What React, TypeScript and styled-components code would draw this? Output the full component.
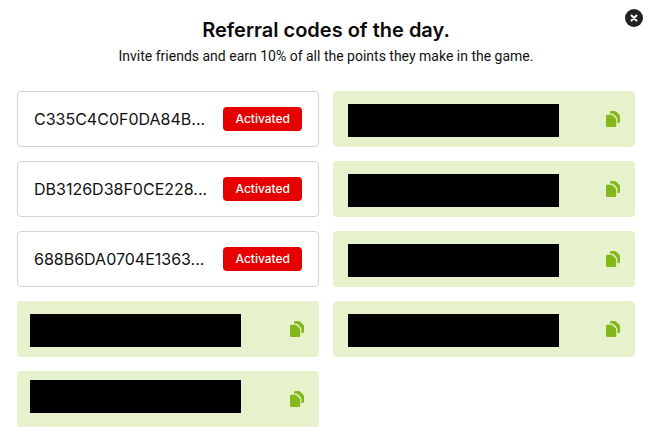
import React from "react";
import styled, { createGlobalStyle } from "styled-components";

const GlobalStyle = createGlobalStyle`
  * { box-sizing: border-box; }
  body { margin: 0; background: #fff; }
`;

const Dialog = styled.main`
  position: relative;
  padding: 16px 19px 16px 17px;
  font-family: Inter, sans-serif;
  color: #111;
`;

const CloseButton = styled.button`
  position: absolute;
  top: 9px;
  right: 11px;
  width: 18px;
  height: 18px;
  padding: 0;
  border: 0;
  border-radius: 50%;
  background: #212121;
  cursor: pointer;

  svg { display: block; }
`;

const Header = styled.header`
  margin-bottom: 22px;
  text-align: center;
`;

const Title = styled.h1`
  margin: 0;
  font-size: 20px;
  font-weight: 600;
  line-height: 28px;
  color: #0a0a0a;
`;

const Subtitle = styled.p`
  margin: 0;
  font-family: Roboto, sans-serif;
  font-size: 14px;
  line-height: 25px;
`;

const CodeGrid = styled.ul`
  display: grid;
  grid-template-columns: 1fr 1fr;
  gap: 14px;
  margin: 0;
  padding: 0;
  list-style: none;
`;

const Card = styled.li<{ $available?: boolean }>`
  display: flex;
  align-items: center;
  justify-content: space-between;
  height: 56px;
  padding: 0 16px;
  border: 1px solid ${(p) => (p.$available ? "#e5f2cb" : "#d4d4d4")};
  border-radius: 4px;
  background: ${(p) => (p.$available ? "#e5f2cb" : "#fff")};
`;

const CodeText = styled.span`
  font-size: 16px;
  line-height: 24px;
  white-space: nowrap;
`;

const Badge = styled.span`
  padding: 0 12px;
  border-radius: 4px;
  background: #e60000;
  color: #fff;
  font-size: 12px;
  font-weight: 500;
  line-height: 24px;
`;

const AvailableCard = styled(Card)<{ $inset: number }>`
  padding: 0 14px 0 ${(p) => p.$inset}px;
`;

const HiddenCode = styled.span<{ $top: number }>`
  align-self: flex-start;
  width: 211px;
  height: 33px;
  margin-top: ${(p) => p.$top}px;
  background: #000;
`;

const CopyButton = styled.button`
  padding: 0;
  border: 0;
  background: none;
  color: #84b81a;
  cursor: pointer;

  svg { display: block; }
`;

type Entry = { code: string } | { inset: number; top: number };

const entries: Entry[] = [
  { code: "C335C4C0F0DA84B..." },
  { inset: 14, top: 12 },
  { code: "DB3126D38F0CE228..." },
  { inset: 14, top: 12 },
  { code: "688B6DA0704E1363..." },
  { inset: 14, top: 12 },
  { inset: 12, top: 12 },
  { inset: 14, top: 12 },
  { inset: 12, top: 8 },
];

const CopyIcon = () => (
  <svg width="14" height="16" viewBox="0 0 14 16" fill="currentColor" aria-hidden="true">
    <path d="M1.300 3.800H5.500C6.200 3.800 10.200 7.300 10.200 8.600V14.700A1.300 1.300 0 0 1 8.900 16H1.300A1.300 1.300 0 0 1 0 14.700V5.100A1.300 1.300 0 0 1 1.300 3.800Z" />
    <path d="M4 1.300A1.300 1.300 0 0 1 5.300 0H9C9.800 0 14 4 14 5V10.700A1.300 1.300 0 0 1 12.700 12H11.400V8.300C11.400 6.600 7.500 2.600 6.200 2.600H4Z" />
  </svg>
);

export default function App() {
  return (
    <>
      <GlobalStyle />
      <Dialog>
        <CloseButton aria-label="Close">
          <svg width="18" height="18" viewBox="0 0 18 18" aria-hidden="true">
            <path d="M6.500 6.500l5 5M11.500 6.500l-5 5" stroke="#fff" strokeWidth="2" strokeLinecap="round" />
          </svg>
        </CloseButton>
        <Header>
          <Title>Referral codes of the day.</Title>
          <Subtitle>Invite friends and earn 10% of all the points they make in the game.</Subtitle>
        </Header>
        <CodeGrid>
          {entries.map((entry, i) =>
            "code" in entry ? (
              <Card key={i}>
                <CodeText>{entry.code}</CodeText>
                <Badge>Activated</Badge>
              </Card>
            ) : (
              <AvailableCard key={i} $available $inset={entry.inset}>
                <HiddenCode $top={entry.top} />
                <CopyButton aria-label="Copy code">
                  <CopyIcon />
                </CopyButton>
              </AvailableCard>
            )
          )}
        </CodeGrid>
      </Dialog>
    </>
  );
}
